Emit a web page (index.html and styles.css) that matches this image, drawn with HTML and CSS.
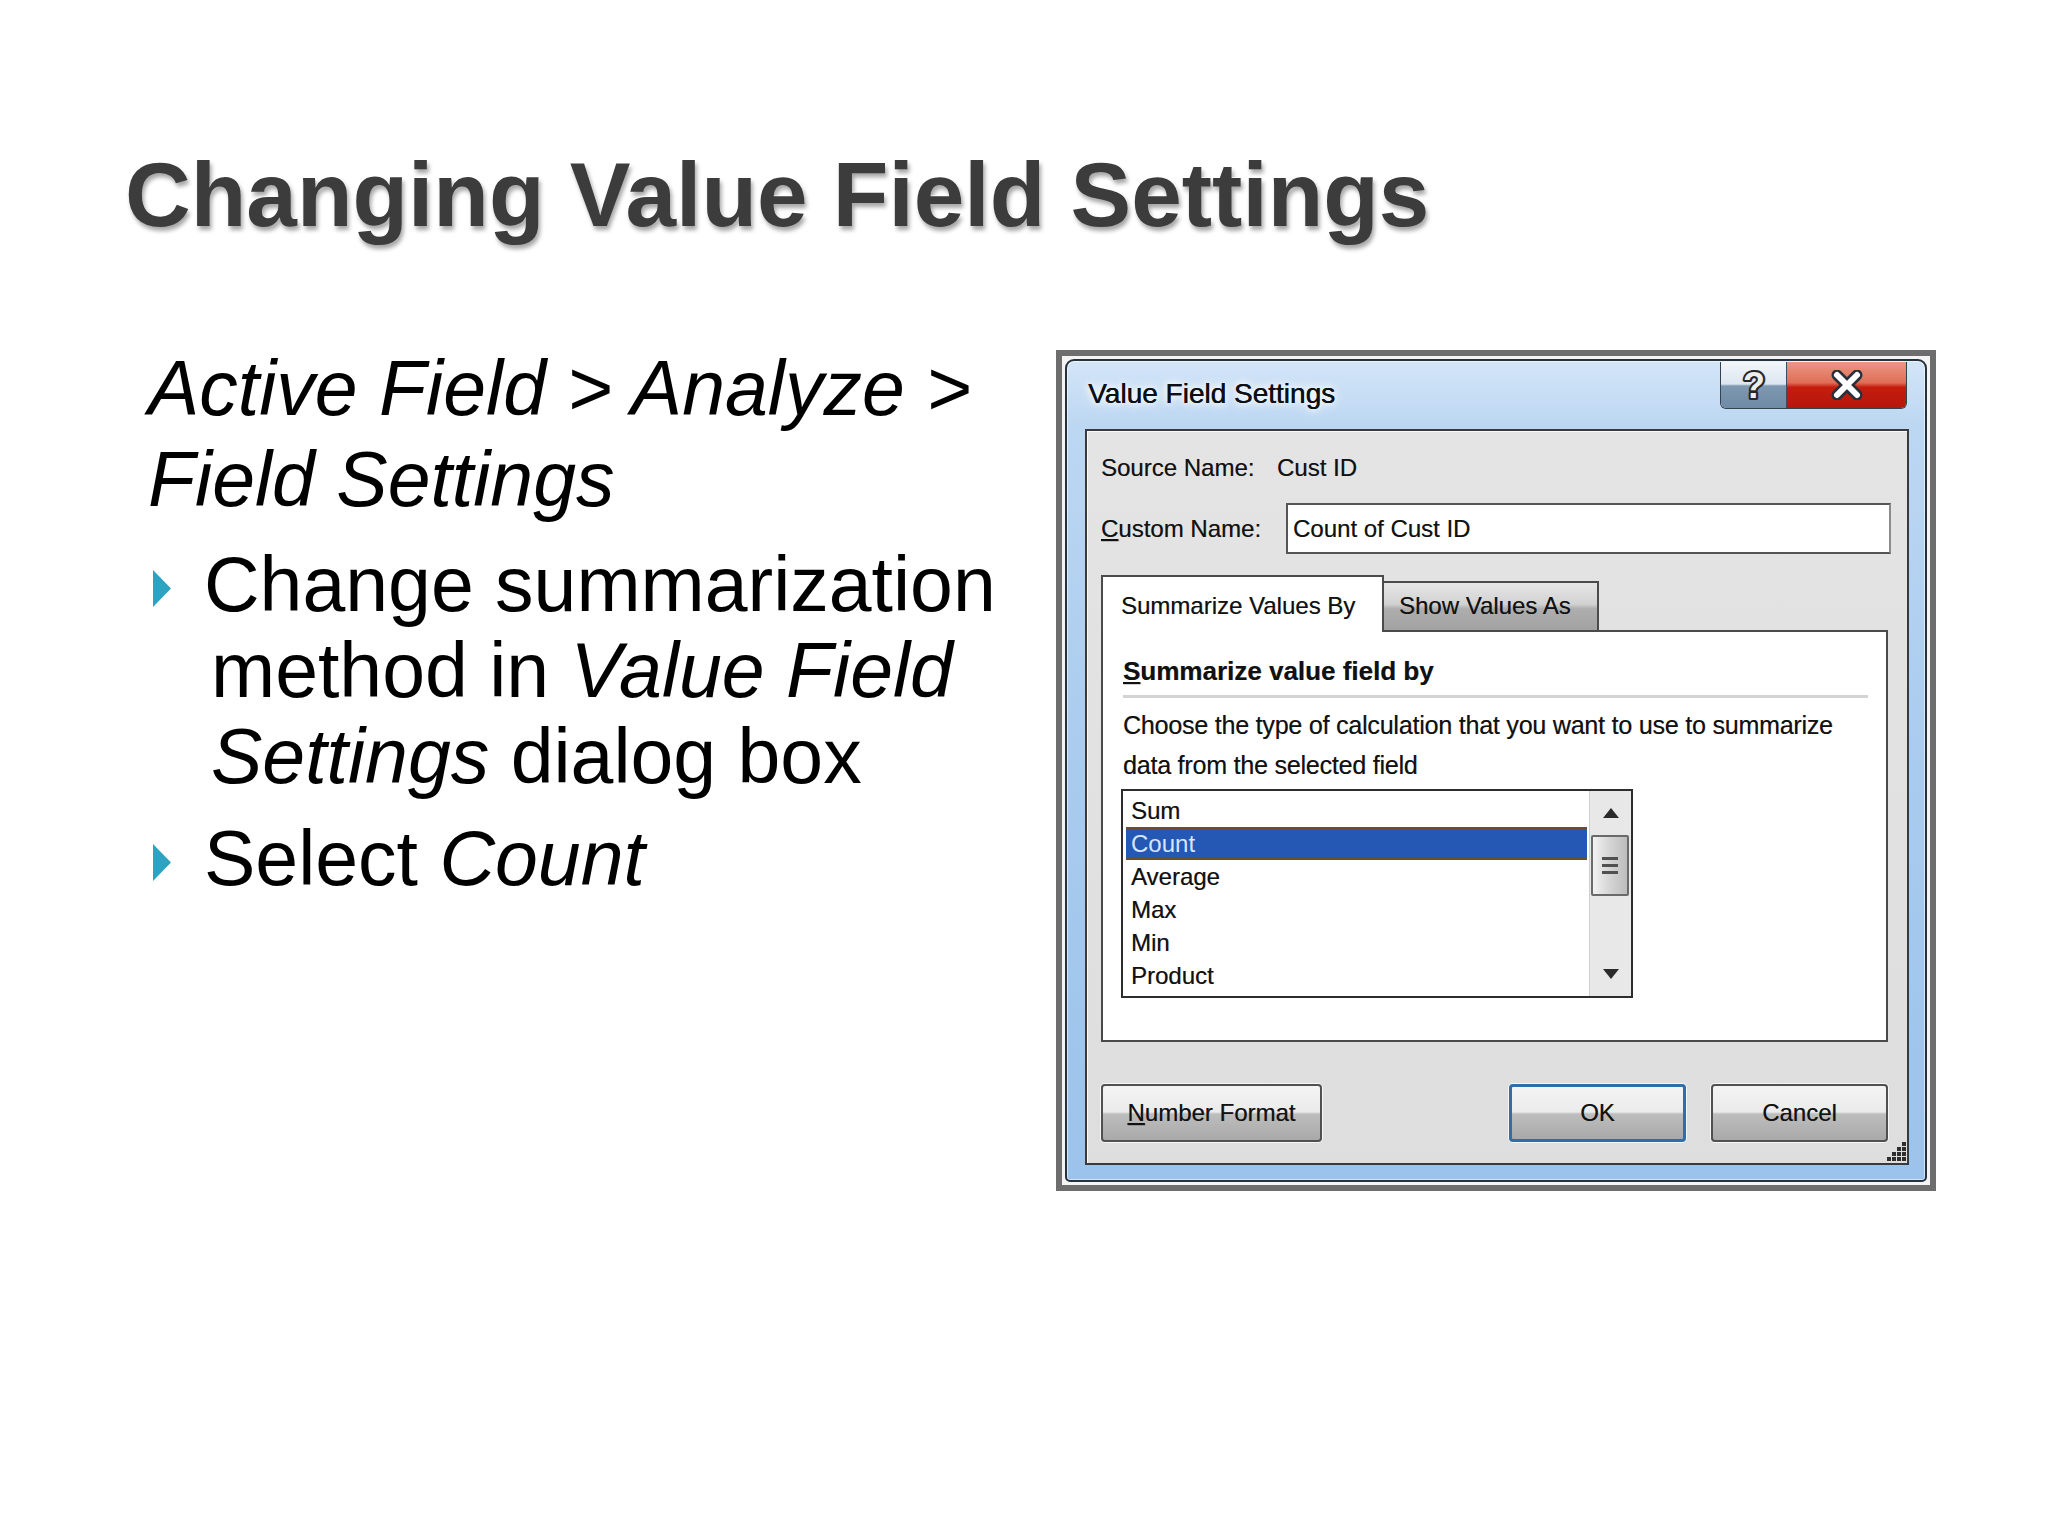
FILE: index.html
```html
<!DOCTYPE html>
<html lang="en">
<head>
<meta charset="utf-8">
<title>Changing Value Field Settings</title>
<link rel="stylesheet" href="styles.css">
</head>
<body>
<div class="slide">
  <h1 class="title">Changing Value Field Settings</h1>
  <div class="content">
    <div class="text-col">
      <p class="lead"><em>Active Field &gt; Analyze &gt;</em><br><em>Field Settings</em></p>
      <ul class="bullets">
        <li>
          <span class="marker"><svg width="18" height="37" viewBox="0 0 18 37"><polygon points="0,0 18,18.5 0,37" fill="#2ea3c1"/></svg></span>
          <span class="btext"><span>Change summarization</span> <span>method in</span> <em>Value Field</em> <em>Settings</em> <span>dialog box</span></span>
        </li>
        <li>
          <span class="marker"><svg width="18" height="37" viewBox="0 0 18 37"><polygon points="0,0 18,18.5 0,37" fill="#2ea3c1"/></svg></span>
          <span class="btext">Select <em>Count</em></span>
        </li>
      </ul>
    </div>

    <div class="dlg-frame">
      <div class="window">
        <div class="titlebar">
          <span class="wtitle">Value Field Settings</span>
          <div class="caption-btns">
            <span class="cbtn help">
              <svg width="30" height="40" viewBox="0 0 30 40">
                <text x="15" y="33" text-anchor="middle" class="qmark">?</text>
              </svg>
            </span>
            <span class="cbtn close">
              <svg width="36" height="30" viewBox="0 0 36 30">
                <path d="M8 5 L28 25 M28 5 L8 25" stroke="#2a2f3a" stroke-width="11" stroke-linecap="round" fill="none"/>
                <path d="M8 5 L28 25 M28 5 L8 25" stroke="#ffffff" stroke-width="6" stroke-linecap="round" fill="none"/>
              </svg>
            </span>
          </div>
        </div>

        <div class="client">
          <div class="row-source">
            <span class="lbl-source">Source Name:</span>
            <span>Cust ID</span>
          </div>
          <div class="row-custom">
            <span class="lbl-custom"><u>C</u>ustom Name:</span>
            <div class="input">Count of Cust ID</div>
          </div>

          <div class="tabs">
            <div class="tab active">Summarize Values By</div>
            <div class="tab inactive">Show Values As</div>
          </div>
          <div class="panel">
            <div class="heading"><u>S</u>ummarize value field by</div>
            <div class="sep"></div>
            <div class="desc">Choose the type of calculation that you want to use to summarize<br>data from the selected field</div>
            <div class="listbox">
              <div class="items">
                <div class="item">Sum</div>
                <div class="item selected">Count</div>
                <div class="item">Average</div>
                <div class="item">Max</div>
                <div class="item">Min</div>
                <div class="item">Product</div>
              </div>
              <div class="scrollbar">
                <div class="sb-btn"><svg width="16" height="10" viewBox="0 0 16 10"><polygon points="8,0 16,10 0,10" fill="#2b2b2b"/></svg></div>
                <div class="sb-thumb"><span></span><span></span><span></span></div>
                <div class="sb-track"></div>
                <div class="sb-btn"><svg width="16" height="10" viewBox="0 0 16 10"><polygon points="0,0 16,0 8,10" fill="#2b2b2b"/></svg></div>
              </div>
            </div>
          </div>

          <div class="buttons">
            <div class="btn btn-wide"><u>N</u>umber Format</div>
            <div class="spacer"></div>
            <div class="btn btn-ok">OK</div>
            <div class="btn">Cancel</div>
          </div>

          <svg class="grip" width="24" height="24" viewBox="0 0 24 24">
            <g fill="#2e2e2e">
              <rect x="19" y="3" width="4" height="4"/>
              <rect x="14" y="8" width="4" height="4"/><rect x="19" y="8" width="4" height="4"/>
              <rect x="9" y="13" width="4" height="4"/><rect x="14" y="13" width="4" height="4"/><rect x="19" y="13" width="4" height="4"/>
              <rect x="4" y="18" width="4" height="4"/><rect x="9" y="18" width="4" height="4"/><rect x="14" y="18" width="4" height="4"/><rect x="19" y="18" width="4" height="4"/>
            </g>
          </svg>
        </div>
      </div>
    </div>
  </div>
</div>
</body>
</html>
```

FILE: styles.css
```css
* { box-sizing: border-box; }
html, body { margin: 0; padding: 0; }
body {
  background: #ffffff;
  width: 2048px;
  height: 1536px;
  font-family: "Liberation Sans", Arial, sans-serif;
  overflow: hidden;
}
.slide {
  width: 2048px;
  height: 1536px;
  padding-top: 150px;
}
.title {
  margin: 0 0 0 125px;
  font-size: 91px;
  line-height: 90px;
  font-weight: bold;
  color: #3c3c3c;
  text-shadow: 0 -1px 0 rgba(255,255,255,0.6), 2px 4px 4px rgba(0,0,0,0.35);
}
.content {
  display: flex;
  align-items: flex-start;
  margin-top: 103px;
  padding-left: 148px;
}
.text-col {
  width: 908px;
  flex: none;
  font-size: 77px;
  color: #000;
}
.lead {
  margin: 0;
  line-height: 91px;
}
.bullets {
  list-style: none;
  margin: 0;
  padding: 0;
}
.bullets li {
  display: flex;
  align-items: flex-start;
  margin-top: 16px;
  line-height: 86px;
}
.marker {
  width: 56px;
  flex: none;
  padding-left: 5px;
  padding-top: 29px;
  line-height: 0;
}
.btext {
  width: 820px;
  padding-left: 7px;
  text-indent: -7px;
}

/* dialog */
.dlg-frame {
  flex: none;
  margin-top: 7px;
  width: 880px;
  height: 841px;
  border: 6px solid #6d6d6d;
  padding: 3px;
  background: #f4f4f4;
}
.window {
  height: 100%;
  border: 2px solid #27313b;
  border-radius: 9px 9px 5px 5px;
  background: linear-gradient(#d3e5f8 0, #bcd7f2 8%, #a9cbee 50%, #9cc3eb 100%);
  box-shadow: inset 0 0 0 1px rgba(255,255,255,0.55);
  display: flex;
  flex-direction: column;
  font-size: 24px;
  color: #111;
  text-shadow: 0.4px 0.4px 0 rgba(0,0,0,0.45);
}
.titlebar {
  height: 68px;
  flex: none;
  display: flex;
  justify-content: space-between;
  align-items: flex-start;
  padding: 0 18px 0 21px;
}
.wtitle {
  margin-top: 16px;
  font-size: 28px;
  line-height: 34px;
  color: #0c1014;
  text-shadow: 0.5px 0 0 #0c1014, 0 0 6px #fff, 0 0 10px #fff, 0 0 14px #eaf3fc;
}
.caption-btns {
  display: flex;
  margin-top: 1px;
  border: 1px solid #34414f;
  border-top: none;
  border-radius: 0 0 6px 6px;
  overflow: hidden;
}
.cbtn {
  height: 46px;
  display: flex;
  align-items: center;
  justify-content: center;
}
.help {
  width: 66px;
  background: linear-gradient(#f2f6fa 0, #dce6f0 48%, #7f98b1 52%, #6f8aa6 100%);
  border-right: 1px solid #3f4c5a;
}
.qmark {
  font-family: "Liberation Sans", Arial, sans-serif;
  font-weight: bold;
  font-size: 36px;
  fill: #eeeeee;
  stroke: #262626;
  stroke-width: 4px;
  paint-order: stroke;
  stroke-linejoin: round;
}
.close {
  width: 119px;
  background: linear-gradient(#eb9783 0, #df6e57 45%, #c41d0e 55%, #b5170b 100%);
}

.client {
  position: relative;
  flex: 1;
  margin: 0 16px 15px 18px;
  border: 2px solid #3a3a3a;
  box-shadow: inset 1px 1px 0 #f8f8f8;
  background: linear-gradient(#e4e4e4, #dedede);
  padding: 22px 16px 0 14px;
}
.row-source {
  display: flex;
  line-height: 30px;
  height: 30px;
}
.lbl-source { width: 176px; flex: none; }
.row-custom {
  display: flex;
  align-items: center;
  margin-top: 20px;
  height: 51px;
  line-height: 30px;
}
.lbl-custom { width: 185px; flex: none; }
.input {
  flex: 1;
  height: 51px;
  background: #fff;
  border: 2px solid #555;
  border-right-color: #8c8c8c;
  padding-left: 5px;
  display: flex;
  align-items: center;
}
.tabs {
  display: flex;
  align-items: flex-end;
  margin-top: 21px;
  height: 55px;
  position: relative;
  z-index: 1;
}
.tab { line-height: 30px; }
.tab.active {
  width: 283px;
  height: 57px;
  margin-bottom: -2px;
  background: #fff;
  border: 2px solid #4b4b4b;
  border-bottom: none;
  padding: 14px 0 0 18px;
}
.tab.inactive {
  width: 215px;
  height: 49px;
  background: linear-gradient(#e6e6e6 0, #d2d2d2 45%, #aeaeae 55%, #a2a2a2 100%);
  border: 2px solid #4b4b4b;
  border-left: none;
  border-bottom: none;
  padding: 8px 0 0 15px;
}
.panel {
  width: 787px;
  height: 412px;
  background: #fff;
  border: 2px solid #4a4a4a;
  padding: 0 18px 0 20px;
}
.heading {
  margin-top: 24px;
  font-weight: bold;
  font-size: 26px;
  line-height: 30px;
}
.sep {
  margin-top: 9px;
  height: 3px;
  background: #d3d3d3;
}
.desc {
  margin-top: 7px;
  font-size: 25px;
  line-height: 40px;
  letter-spacing: -0.2px;
}
.listbox {
  margin: 4px 0 0 -2px;
  width: 512px;
  height: 209px;
  border: 2px solid #2d2d2d;
  display: flex;
  background: #fff;
}
.items {
  flex: 1;
  padding: 3px 2px 0 3px;
}
.item {
  height: 33px;
  line-height: 33px;
  padding-left: 5px;
}
.item.selected {
  background: #2458b4;
  color: #d7e5ff;
  border-top: 2px solid #6d4d2e;
  border-bottom: 2px solid #6d4d2e;
  line-height: 29px;
  text-shadow: none;
}
.scrollbar {
  width: 42px;
  flex: none;
  display: flex;
  flex-direction: column;
  background: #e8e8e8;
  border-left: 1px solid #cfcfcf;
}
.sb-btn {
  height: 44px;
  flex: none;
  display: flex;
  align-items: center;
  justify-content: center;
}
.sb-thumb {
  height: 61px;
  flex: none;
  margin: 0 2px 0 1px;
  border: 2px solid #6a6a6a;
  border-radius: 2px;
  background: linear-gradient(90deg, #f2f2f2, #d4d4d4 50%, #bdbdbd);
  display: flex;
  flex-direction: column;
  align-items: center;
  justify-content: center;
  gap: 4px;
}
.sb-thumb span {
  width: 16px;
  height: 3px;
  background: #505050;
}
.sb-track { flex: 1; }
.buttons {
  display: flex;
  width: 787px;
  margin-top: 42px;
  height: 58px;
}
.spacer { flex: 1; }
.btn {
  width: 177px;
  height: 58px;
  border: 2px solid #505050;
  border-radius: 4px;
  box-shadow: 0 0 0 1px #f6f6f6;
  background: linear-gradient(#f4f4f4 0, #ebebeb 48%, #bdbdbd 52%, #a9a9a9 100%);
  display: flex;
  align-items: center;
  justify-content: center;
  line-height: 30px;
}
.btn + .btn { margin-left: 25px; }
.btn-wide { width: 221px; }
.btn-ok {
  border: 3px solid #2f6ea6;
}
.grip {
  position: absolute;
  right: 0;
  bottom: 0;
}
```
